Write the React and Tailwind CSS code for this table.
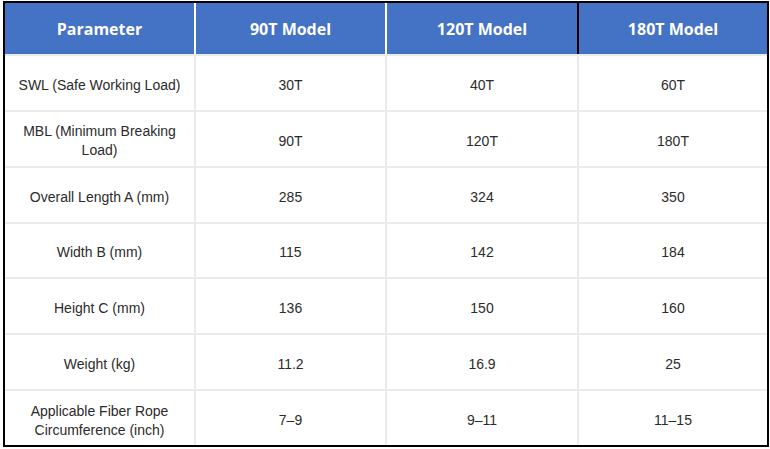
const headers = ["Parameter", "90T Model", "120T Model", "180T Model"];

const rows = [
  ["SWL (Safe Working Load)", "30T", "40T", "60T"],
  ["MBL (Minimum Breaking Load)", "90T", "120T", "180T"],
  ["Overall Length A (mm)", "285", "324", "350"],
  ["Width B (mm)", "115", "142", "184"],
  ["Height C (mm)", "136", "150", "160"],
  ["Weight (kg)", "11.2", "16.9", "25"],
  ["Applicable Fiber Rope Circumference (inch)", "7–9", "9–11", "11–15"],
];

const cols = "grid-cols-[189px_189px_190px_188px]";

export default function App() {
  return (
    <div className="w-[770px] h-[449px] bg-white pt-[1px] pl-[3px]">
      <div className="w-[766px] h-[446px] border-2 border-black bg-[#ebebeb] flex flex-col">
        {/* Header */}
        <div className={`grid ${cols} gap-x-[2px] bg-white h-[51px] shrink-0`}>
          {headers.map((h, i) => (
            <div
              key={h}
              className={`bg-[#4472c4] flex items-center justify-center text-white font-bold text-[16px] ${
                i === 3 ? "shadow-[-2px_0_0_0_#000]" : ""
              }`}
              style={{ fontFamily: '"Open Sans", "Noto Sans", sans-serif' }}
            >
              {h}
            </div>
          ))}
        </div>

        {/* Body */}
        <div className={`grid ${cols} gap-[2px] pt-[2px] flex-1 auto-rows-fr`}>
          {rows.map((r) =>
            r.map((c, j) => (
              <div
                key={r[0] + j}
                className="bg-white flex items-center justify-center text-center text-[14px] leading-[19px] text-[#2b2b2b] px-3 pt-[5px]"
                style={{ fontFamily: '"Liberation Sans", Arial, sans-serif' }}
              >
                {c}
              </div>
            ))
          )}
        </div>
      </div>
    </div>
  );
}
